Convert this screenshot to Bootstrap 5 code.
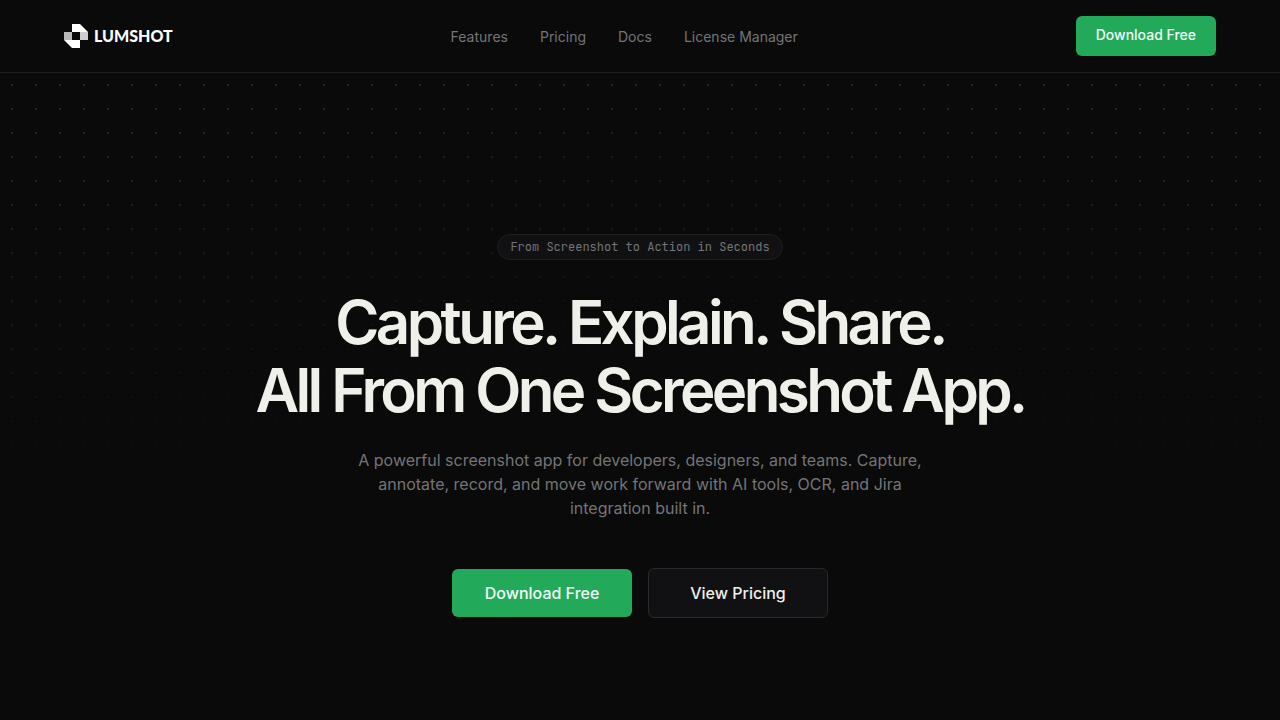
<!DOCTYPE html>
<html lang="en" data-bs-theme="dark">
<head>
<meta charset="utf-8">
<meta name="viewport" content="width=device-width, initial-scale=1">
<title>Lumshot</title>
<link href="https://cdn.jsdelivr.net/npm/bootstrap@5.3.0/dist/css/bootstrap.min.css" rel="stylesheet">
<style>
  :root { --page: #0a0a0a; --line: #1f1f22; --muted: #747478; --surface: #111113; --green: #22a95a; }
  body { font-family: Inter, sans-serif; background: var(--page); color: #f0f0ea; }
  .site-header { border-bottom: 1px solid var(--line); }
  .header-inner { padding: 16px 64px; }
  .brand { gap: 6px; }
  .brand svg { display: block; }
  .brand-name { font: 900 16px/24px Lato, sans-serif; color: #fff; }
  .site-nav { gap: 32px; font-size: 14px; line-height: 20px; padding-top: 2px; }
  .site-nav a { color: var(--muted); text-decoration: none; }
  .site-nav a:hover { color: #fff; }
  .btn-green { --bs-btn-bg: var(--green); --bs-btn-color: #f4fff8; --bs-btn-border-width: 0; --bs-btn-hover-bg: #1d954f; --bs-btn-hover-color: #fff; }
  .btn-surface { --bs-btn-bg: var(--surface); --bs-btn-color: #f0f0ea; --bs-btn-border-color: #29292d; --bs-btn-hover-bg: #1a1a1d; --bs-btn-hover-color: #fff; }
  .header-btn { font-size: 14px; font-weight: 500; line-height: 20px; padding: 9px 20px 11px; }
  .hero { padding: 161px 24px 160px;
    background: linear-gradient(rgba(10,10,10,0), var(--page) 64%),
      radial-gradient(ellipse at 50% 65%, var(--page), rgba(10,10,10,0) 80%),
      radial-gradient(circle, #2a2a2c 1px, transparent 1px) 0 0 / 24px 24px; }
  .pill { font: 400 12px/16px "JetBrains Mono", "Liberation Mono", monospace; color: var(--muted); background: var(--surface); border: 1px solid var(--line); padding: 4px 12px; }
  .hero-title { font-size: 60px; line-height: 68px; font-weight: 600; letter-spacing: -0.06em; color: #f0f0ea; margin: 28px 0 24px; }
  .hero-copy { max-width: 576px; font-size: 16px; line-height: 24px; color: var(--muted); margin: 0 0 48px; }
  .hero-btn { min-width: 180px; font-weight: 500; font-size: 16px; line-height: 24px; padding: 12px 24px; }
</style>
</head>
<body>
<header class="site-header">
  <div class="header-inner d-flex flex-wrap justify-content-between align-items-center gap-3">
    <a class="brand d-flex align-items-center text-decoration-none" href="#" aria-label="Lumshot home">
      <svg width="24" height="24" viewBox="0 0 24 24" aria-hidden="true">
        <path fill="#fff" d="M8 0h8l8 8H8zM0 16h16v8H8z"/>
        <path fill="#b8b8b8" d="M0 8h8v8H0z"/>
        <path fill="#cfcfcf" d="M16 8h8v8h-8z"/>
      </svg>
      <span class="brand-name">LUMSHOT</span>
    </a>
    <nav class="site-nav d-flex flex-wrap" aria-label="Main">
      <a href="#">Features</a>
      <a href="#">Pricing</a>
      <a href="#">Docs</a>
      <a href="#">License Manager</a>
    </nav>
    <button type="button" class="btn btn-green header-btn">Download Free</button>
  </div>
</header>
<main>
  <section class="hero d-flex flex-column align-items-center text-center">
    <span class="pill rounded-pill">From Screenshot to Action in Seconds</span>
    <h1 class="hero-title">Capture. Explain. Share.<br>All From One Screenshot App.</h1>
    <p class="hero-copy">A powerful screenshot app for developers, designers, and teams. Capture, annotate, record, and move work forward with AI tools, OCR, and Jira integration built in.</p>
    <div class="d-flex flex-wrap justify-content-center align-items-center gap-3">
      <button type="button" class="btn btn-green hero-btn">Download Free</button>
      <button type="button" class="btn btn-surface hero-btn">View Pricing</button>
    </div>
  </section>
</main>
<script src="https://cdn.jsdelivr.net/npm/bootstrap@5.3.0/dist/js/bootstrap.bundle.min.js"></script>
</body>
</html>
